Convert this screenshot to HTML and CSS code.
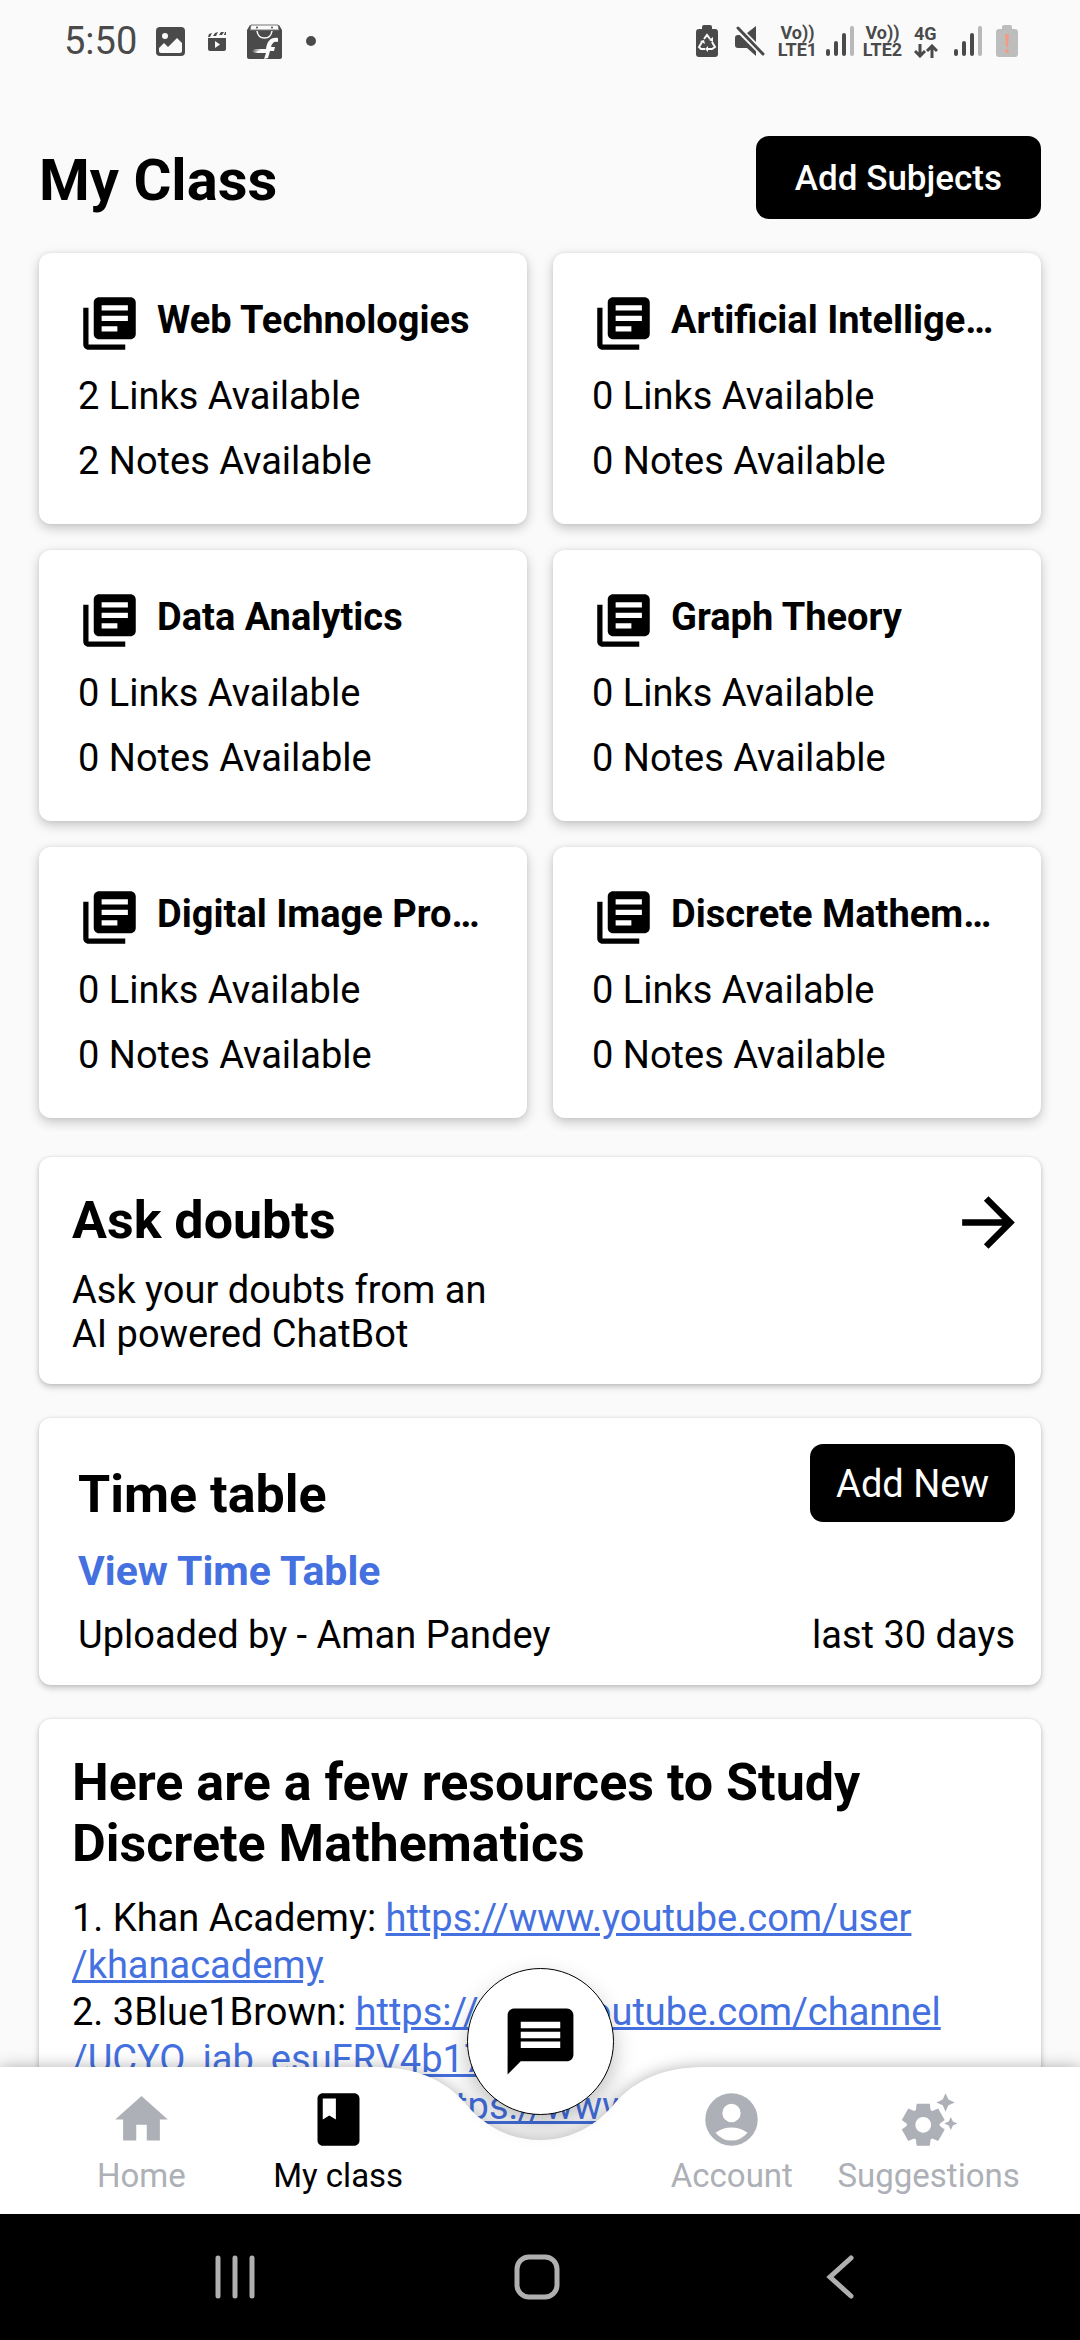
FILE: index.html
```html
<!DOCTYPE html>
<html lang="en">
<head>
<meta charset="utf-8">
<meta name="viewport" content="width=device-width, initial-scale=1">
<title>My Class</title>
<link rel="stylesheet" href="styles.css">
</head>
<body>
<svg class="defs" aria-hidden="true">
  <symbol id="books" viewBox="0 0 24 24"><path d="M4 6H2v14c0 1.1.9 2 2 2h14v-2H4V6zm16-4H8c-1.1 0-2 .9-2 2v12c0 1.1.9 2 2 2h12c1.1 0 2-.9 2-2V4c0-1.1-.9-2-2-2zm-1 9H9V9h10v2zm-4 4H9v-2h6v2zm4-8H9V5h10v2z"/></symbol>
  <symbol id="signal" viewBox="0 0 28 30"><path d="M2 25v3M10 17v11M18 9v19" fill="none" stroke="#4a4a4a" stroke-width="4" stroke-linecap="round"/><path d="M26 2v26" stroke="#b8b8b8" stroke-width="4" stroke-linecap="round"/></symbol>
</svg>

<div class="status">
  <div class="status-left">
    <span class="clock">5:50</span>
    <svg class="i-photo" viewBox="0 0 29 29"><rect width="29" height="29" rx="4"/><circle cx="9" cy="9" r="3" fill="#fafafa"/><path d="M3 24v-3l5-5 4 4 9-9 5 5v8q0 2-2 2H5q-2 0-2-2z" fill="#fafafa"/></svg>
    <svg class="i-clap" viewBox="0 0 18 19"><path d="M0 6h18v11q0 2-2 2H2q-2 0-2-2zM0 5l1-3 3-1-2 4zM5 4l2-3 3-1-2 4zM11 3l2-3h3l-2 3zM16 3l1-3h1v3z"/><path d="M7 9v7l5-3.500z" fill="#fafafa"/></svg>
    <svg class="i-bag" viewBox="0 0 35 35"><path d="M0 6l3-5h29l3 5v27q0 2-2 2H2q-2 0-2-2z"/><path d="M4 1h27l1 5H3z" fill="#fafafa" stroke="#777" stroke-width="1"/><circle cx="10" cy="3.500" r="1"/><circle cx="25" cy="3.500" r="1"/><path d="M10 7q1 7 7.500 7T25 7" fill="none" stroke="#fafafa" stroke-width="1.500"/><path d="M17 35l2-6H6l5-1-6-1 9-1-8-1h13c1-7 4-12 12-11v4c-4-1-6 1-7 5h4l-1 4h-4l-2 7z" fill="#fafafa"/></svg>
    <span class="dot"></span>
  </div>
  <div class="status-right">
    <svg class="i-batt" viewBox="0 0 22 32"><path d="M6 4V2q0-2 2-2h6q2 0 2 2v2h3q3 0 3 3v22q0 3-3 3H3q-3 0-3-3V7q0-3 3-3z"/><path d="M8 14l3-4 3 4M16 17l3 5-3 2h-4M9 24H5l-2-2 3-5" fill="none" stroke="#fafafa" stroke-width="2"/><path d="M12 21v6l-3-3zM4 16l4-1 1 4zM13 15l4-3v5z" fill="#fafafa"/></svg>
    <svg class="i-mute" viewBox="0 0 30 30"><path d="M0 12q0-3 3-3h3l15 15v6l-9-8H3q-3 0-3-3zM12 7l9-7v16z"/><path d="M2 2l26 26" stroke="#fafafa" stroke-width="6"/><path d="M3 2l25 26" stroke="#4a4a4a" stroke-width="3" stroke-linecap="round"/></svg>
    <span class="volte">Vo))<br>LTE1</span>
    <svg class="i-signal"><use href="#signal"/></svg>
    <span class="volte">Vo))<br>LTE2</span>
    <span class="data">4G<svg viewBox="0 0 24 14"><path d="M6 0v12M1 7l5 5 5-5M18 14V2M13 7l5-5 5 5" fill="none" stroke="#4a4a4a" stroke-width="3"/></svg></span>
    <svg class="i-signal"><use href="#signal"/></svg>
    <svg class="i-batt low" viewBox="0 0 22 32"><path d="M6 4V2q0-2 2-2h6q2 0 2 2v2h3q3 0 3 3v22q0 3-3 3H3q-3 0-3-3V7q0-3 3-3z" fill="#bdbdbd"/><path d="M9 9h4l-1 13h-2z" fill="#f49b83"/><circle cx="11" cy="26" r="2" fill="#f49b83"/></svg>
  </div>
</div>

<div class="app">
  <main class="content">
    <header class="head">
      <h1>My Class</h1>
      <button class="btn btn-subjects" type="button">Add Subjects</button>
    </header>

    <section class="subjects">
      <article class="card subject">
        <div class="subject-head"><svg><use href="#books"/></svg><h2>Web Technologies</h2></div>
        <p>2 Links Available</p><p>2 Notes Available</p>
      </article>
      <article class="card subject">
        <div class="subject-head"><svg><use href="#books"/></svg><h2>Artificial Intelligence</h2></div>
        <p>0 Links Available</p><p>0 Notes Available</p>
      </article>
      <article class="card subject">
        <div class="subject-head"><svg><use href="#books"/></svg><h2>Data Analytics</h2></div>
        <p>0 Links Available</p><p>0 Notes Available</p>
      </article>
      <article class="card subject">
        <div class="subject-head"><svg><use href="#books"/></svg><h2>Graph Theory</h2></div>
        <p>0 Links Available</p><p>0 Notes Available</p>
      </article>
      <article class="card subject">
        <div class="subject-head"><svg><use href="#books"/></svg><h2>Digital Image Processing</h2></div>
        <p>0 Links Available</p><p>0 Notes Available</p>
      </article>
      <article class="card subject">
        <div class="subject-head"><svg><use href="#books"/></svg><h2>Discrete Mathematics</h2></div>
        <p>0 Links Available</p><p>0 Notes Available</p>
      </article>
    </section>

    <div class="stack">
      <section class="card ask">
        <div>
          <h2>Ask doubts</h2>
          <p>Ask your doubts from an<br>AI powered ChatBot</p>
        </div>
        <button class="ask-go" type="button" aria-label="Open chatbot"><svg viewBox="0 0 24 24"><path d="M12 4l-1.410 1.410L16.170 11H4v2h12.170l-5.580 5.590L12 20l8-8z"/></svg></button>
      </section>

      <section class="card timetable">
        <div class="timetable-head">
          <h2>Time table</h2>
          <button class="btn btn-new" type="button">Add New</button>
        </div>
        <a class="view" href="#timetable">View Time Table</a>
        <div class="meta"><span>Uploaded by - Aman Pandey</span><span>last 30 days</span></div>
      </section>

      <section class="card resources">
        <h2>Here are a few resources to Study Discrete Mathematics</h2>
        <p>1. Khan Academy: <a href="#khan">https://www.youtube.com/user<wbr>/khanacademy</a></p>
        <p>2. 3Blue1Brown: <a href="#3b1b">https://www.youtube.com/channel<wbr>/UCYO_jab_esuFRV4b17AJtAw</a></p>
        <p>3. PatrickJMT Math: <a href="#patrickjmt">https://www.youtube.com<wbr>/user/patrickJMT</a></p>
      </section>
    </div>
  </main>

  <nav class="tabs">
    <div class="tabs-shape">
      <span></span>
      <svg viewBox="0 0 328 147"><path d="M0 0C41 0 70 14 89 36C106 57 132 73 164 73S222 57 239 36C258 14 287 0 328 0V147H0z"/></svg>
      <span></span>
    </div>
    <a class="tab" href="#home"><svg viewBox="0 0 24 24"><path d="M10 20v-6h4v6h5v-8h3L12 3 2 12h3v8z"/></svg>Home</a>
    <a class="tab active" href="#class" aria-current="page"><svg viewBox="0 0 24 24"><path d="M18 2H6c-1.100 0-2 .9-2 2v16c0 1.100.9 2 2 2h12c1.100 0 2-.9 2-2V4c0-1.100-.9-2-2-2zM6 4h5v8l-2.500-1.500L6 12V4z"/></svg>My class</a>
    <a class="tab account" href="#account"><svg viewBox="0 0 24 24"><path fill-rule="evenodd" d="M12 2a10 10 0 1 0 0 20a10 10 0 1 0 0-20zM12 6a3.500 3.500 0 1 1 0 7a3.500 3.500 0 1 1 0-7zM5.900 17Q8.700 15 12 15T18.100 17Q15.500 20 12 20T5.900 17z"/></svg>Account</a>
    <a class="tab" href="#suggestions"><svg viewBox="0 0 24 24"><path d="M17.410 6.590 15 5.500l2.410-1.090L18.500 2l1.090 2.410L22 5.500l-2.410 1.090L18.500 9l-1.090-2.410zm3.870 6.130L20.500 11l-.78 1.720-1.720.78 1.720.78.78 1.720.78-1.720L23 13.500l-1.720-.78zm-5.040 1.650 1.940 1.470-2.500 4.330-2.240-.94c-.2.13-.42.26-.64.37l-.3 2.400h-5l-.3-2.410c-.22-.11-.43-.23-.64-.37l-2.240.94-2.500-4.330 1.940-1.470c-.01-.11-.01-.24-.01-.36s0-.25.01-.37l-1.940-1.470 2.500-4.330 2.240.94c.2-.13.42-.26.64-.37L7.500 6h5l.3 2.410c.22.11.43.23.64.37l2.240-.94 2.500 4.330-1.940 1.470c.01.12.01.24.01.37s0 .24-.01.36zM13 14c0-1.660-1.340-3-3-3s-3 1.340-3 3 1.340 3 3 3 3-1.340 3-3z"/></svg>Suggestions</a>
    <button class="fab" type="button" aria-label="Messages"><svg viewBox="0 0 24 24"><path d="M20 2H4c-1.100 0-1.990.9-1.990 2L2 22l4-4h14c1.100 0 2-.9 2-2V4c0-1.100-.9-2-2-2zm-2 12H6v-2h12v2zm0-3H6V9h12v2zm0-3H6V6h12v2z"/></svg></button>
  </nav>
</div>

<div class="system">
  <button type="button" aria-label="Recent apps"><svg viewBox="0 0 48 48"><path d="M7 5v38M24 5v38M41 5v38"/></svg></button>
  <button type="button" aria-label="Home screen"><svg viewBox="0 0 48 48"><rect x="4" y="4" width="40" height="40" rx="12"/></svg></button>
  <button type="button" aria-label="Back"><svg viewBox="0 0 48 48"><path d="M36 5L15 24l21 19"/></svg></button>
</div>
</body>
</html>
```

FILE: styles.css
```css
* { box-sizing: border-box; margin: 0; }

body {
  display: flex;
  flex-direction: column;
  height: 100vh;
  background: #fafafa;
  color: #000;
  font: 38px/44px Roboto, sans-serif;
}

button { border: 0; padding: 0; background: none; font: inherit; color: inherit; }
svg { display: block; flex: none; }
h1, h2 { font-weight: 700; }
a { color: #4470e0; }
.defs { position: absolute; width: 0; height: 0; }

/* Status bar */
.status {
  display: flex;
  justify-content: space-between;
  height: 80px;
  padding: 2px 62px 0 64px;
  color: #4a4a4a;
  fill: #4a4a4a;
}
.status-left, .status-right { display: flex; align-items: center; }
.clock { margin-right: 19px; }
.i-photo { width: 29px; height: 29px; margin-right: 23px; }
.i-clap { width: 18px; height: 19px; margin-right: 21px; }
.i-bag { width: 35px; height: 35px; margin-right: 24px; }
.dot { width: 10px; height: 10px; border-radius: 50%; background: #4a4a4a; }
.i-batt { width: 22px; height: 32px; margin-right: 17px; }
.i-batt.low { margin: 0; }
.i-mute { width: 30px; height: 30px; margin-right: 12px; }
.volte { width: 41px; margin-right: 8px; font-size: 18px; line-height: 17px; font-weight: 700; text-align: center; }
.i-signal { width: 28px; height: 30px; margin-right: 8px; }
.data { width: 24px; margin: 0 16px 0 3px; font-size: 18px; line-height: 17px; font-weight: 700; }
.data svg { width: 24px; height: 14px; margin-top: 2px; }
.data + .i-signal { margin-right: 14px; }

/* App area: page content with the tab bar floating over it */
.app { position: relative; flex: 1; min-height: 0; overflow: hidden; }
.head {
  display: flex;
  justify-content: space-between;
  align-items: flex-end;
  padding: 56px 39px 21px;
}
.head h1 { font-size: 58px; line-height: 78px; }
.btn { padding-top: 2px; border-radius: 13px; background: #000; color: #fff; }
.btn-subjects { padding-inline: 39px; font-size: 35px; line-height: 81px; font-weight: 500; }
.btn-new { padding-inline: 26px; line-height: 76px; }

.card {
  border-radius: 12px;
  background: #fff;
  box-shadow: 0 3px 6px rgba(0, 0, 0, .22), 0 0 3px rgba(0, 0, 0, .1);
}

.subjects {
  display: grid;
  grid-template-columns: 1fr 1fr;
  gap: 26px;
  margin: 0 26px;
  padding: 13px;
  overflow: hidden;
}
.subject {
  min-width: 0;
  padding: 39px 39px 30px;
  line-height: 65px;
  box-shadow: 0 4px 12px rgba(0, 0, 0, .22), 0 0 4px rgba(0, 0, 0, .06);
}
.subject-head { display: flex; gap: 16px; margin-bottom: 9px; }
.subject-head svg { width: 63px; height: 63px; }
.subject-head h2 {
  min-width: 0;
  font-size: 38px;
  line-height: 57px;
  overflow: hidden;
  white-space: nowrap;
  text-overflow: ellipsis;
}

.stack { display: flex; flex-direction: column; gap: 34px; padding: 26px 39px 0; }
.stack h2 { font-size: 52px; line-height: 61px; }

.ask { display: flex; justify-content: space-between; padding: 33px 13px 28px 33px; }
.ask h2 { margin-bottom: 17px; }
.ask-go { align-self: flex-start; height: 66px; }
.ask-go svg { width: 79px; height: 79px; margin-top: -7px; }

.timetable { padding: 26px 26px 18px 39px; line-height: 64px; }
.timetable-head { display: flex; justify-content: space-between; align-items: flex-start; margin-bottom: 14px; }
.timetable-head h2 { padding-top: 20px; }
.view { display: block; font-size: 41px; font-weight: 700; text-decoration: none; }
.meta { display: flex; justify-content: space-between; }

.resources { padding: 33px 33px 150px; line-height: 47px; }
.resources h2 { margin-bottom: 21px; }

/* Tab bar */
.tabs {
  position: absolute;
  inset: auto 0 0;
  display: grid;
  grid-template-columns: repeat(5, 1fr);
  height: 147px;
  padding: 21px 53px 0 43px;
}
.tabs-shape {
  position: absolute;
  inset: 0;
  display: flex;
  filter: drop-shadow(0 0 8px rgba(0, 0, 0, .3));
}
.tabs-shape span { flex: 1; background: #fff; }
.tabs-shape svg { width: 328px; height: 147px; margin: 0 -1px; fill: #fff; }
.tab {
  position: relative;
  display: flex;
  flex-direction: column;
  align-items: center;
  gap: 7px;
  color: #adb0b6;
  fill: currentColor;
  font-size: 33px;
  line-height: 36px;
  text-decoration: none;
}
.tab svg { width: 63px; height: 63px; }
.tab.active { color: #000; }
.account { grid-column: 4; }
.fab {
  position: absolute;
  left: 50%;
  bottom: 99px;
  display: grid;
  place-items: center;
  width: 147px;
  height: 147px;
  margin-left: -73px;
  border: 1px solid #000;
  border-radius: 50%;
  background: #fff;
  box-shadow: 0 10px 22px rgba(0, 0, 0, .25);
}
.fab svg { width: 79px; height: 79px; }

/* System navigation */
.system {
  display: grid;
  grid-template-columns: repeat(3, 1fr);
  height: 126px;
  padding: 0 90px 0 84px;
  background: #000;
}
.system button { display: grid; place-items: center; }
.system svg { width: 48px; height: 48px; fill: none; stroke: #b0b0b0; stroke-width: 5; stroke-linecap: round; }
```
